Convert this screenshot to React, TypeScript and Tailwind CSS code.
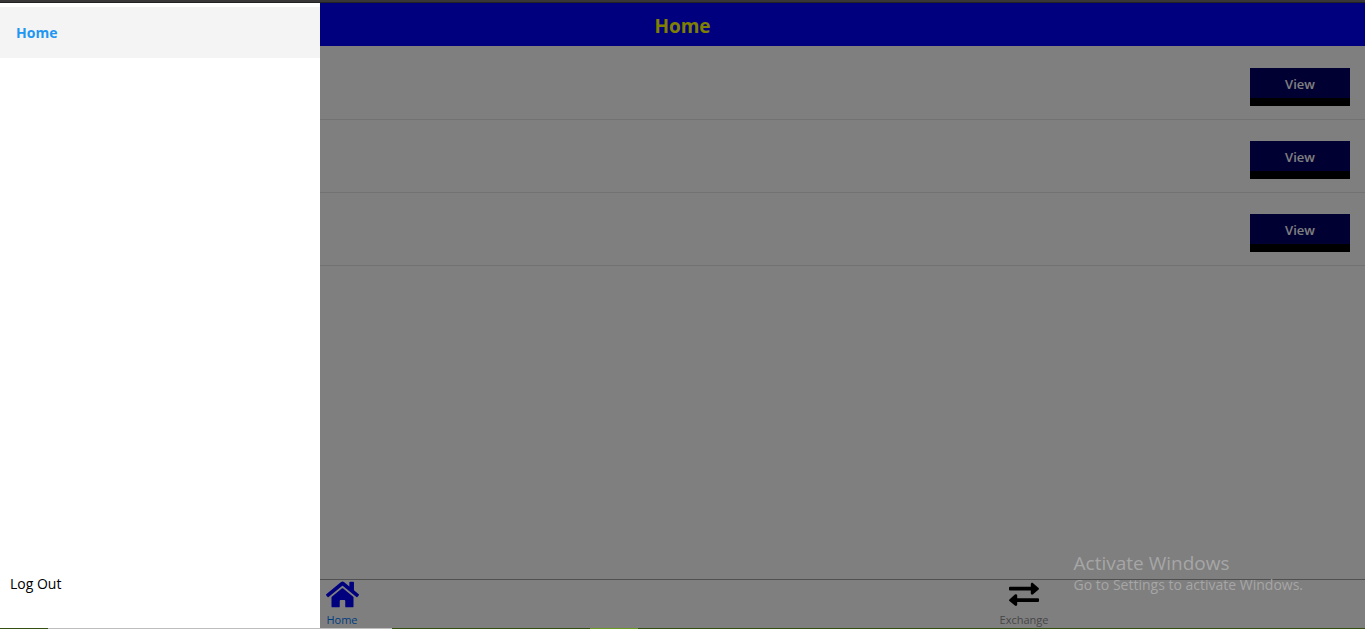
import { FaHome } from "react-icons/fa";

const rows = [1, 2, 3];

function ExchangeIcon() {
  return (
    <svg viewBox="0 0 32 32" className="size-8" fill="currentColor" aria-hidden="true">
      <path d="M2 6.8Q1 6.8 1 7.8V9.6Q1 10.6 2 10.6H22.8V13.2C22.8 14.6 24.2 15.1 25.1 14.2L30.6 9.6Q31.3 8.8 30.6 8L25.1 3.2C24.2 2.3 22.8 2.9 22.8 4.2V6.8Z" />
      <path d="M30 18.2Q31 18.2 31 19.2V21Q31 22 30 22H9.2V24.6C9.2 26 7.8 26.5 6.9 25.6L1.4 21Q.7 20.2 1.4 19.4L6.9 14.6C7.8 13.7 9.2 14.3 9.2 15.6V18.2Z" />
    </svg>
  );
}

function Header() {
  return (
    <header className="flex h-[43px] shrink-0 items-center justify-center bg-[#0000ff] pt-0.5">
      <h1 className="text-[19px] font-bold leading-6 text-[#ffff00]">Home</h1>
    </header>
  );
}

function ListRow() {
  return (
    <li className="flex h-[73px] items-start justify-end border-b border-[#e4e4e4] px-[15px] pt-[21px]">
      <button
        type="button"
        className="h-[38px] w-[100px] border-b-8 border-black bg-[#000066] pt-[2px] text-[13px] font-semibold leading-5 text-white"
      >
        View
      </button>
    </li>
  );
}

function TabBar() {
  return (
    <nav className="grid h-[49px] shrink-0 grid-cols-2 border-t border-[#a0a0a0] pl-px text-[11px] leading-4">
      <a href="#home" className="flex flex-col items-center text-[#007aff]">
        <span className="mb-1 flex h-7 items-center justify-center text-[#0000ff]">
          <FaHome className="size-[33px] shrink-0" />
        </span>
        Home
      </a>
      <a href="#exchange" className="flex flex-col items-center text-[#8e8e8f]">
        <span className="text-black">
          <ExchangeIcon />
        </span>
        Exchange
      </a>
    </nav>
  );
}

function Drawer() {
  return (
    <aside className="absolute inset-y-0 left-0 flex w-80 flex-col justify-between bg-white pt-1 text-[14px]">
      <a href="#home" className="flex h-[51px] items-center bg-[#f4f4f4] px-4 font-bold text-[#2196f3]">
        Home
      </a>
      <button type="button" className="mb-8 self-start px-[10px] leading-6 text-black">
        Log Out
      </button>
    </aside>
  );
}

export default function App() {
  return (
    <div className="relative flex min-h-screen flex-col bg-white font-['Open_Sans','Noto_Sans',sans-serif]">
      <div className="h-[3px] shrink-0 border-b border-[#222222] bg-[#383636]" />
      <div className="relative flex grow flex-col">
        <Header />
        <ul className="grow pt-px">
          {rows.map((row) => (
            <ListRow key={row} />
          ))}
        </ul>
        <TabBar />
        <div className="absolute inset-0 bg-black/50" />
        <Drawer />
      </div>
      <div className="flex h-px shrink-0 bg-[#335011]">
        <div className="w-12" />
        <div className="w-[344px] bg-[#bdbdbd]" />
        <div className="w-[198px]" />
        <div className="w-12 bg-[#6b9a22]" />
      </div>
      <div className="pointer-events-none absolute right-[62px] bottom-[34px] text-[#a6a6a6]">
        <p className="text-[19px] leading-6">Activate Windows</p>
        <p className="text-[14px] leading-5">Go to Settings to activate Windows.</p>
      </div>
    </div>
  );
}
